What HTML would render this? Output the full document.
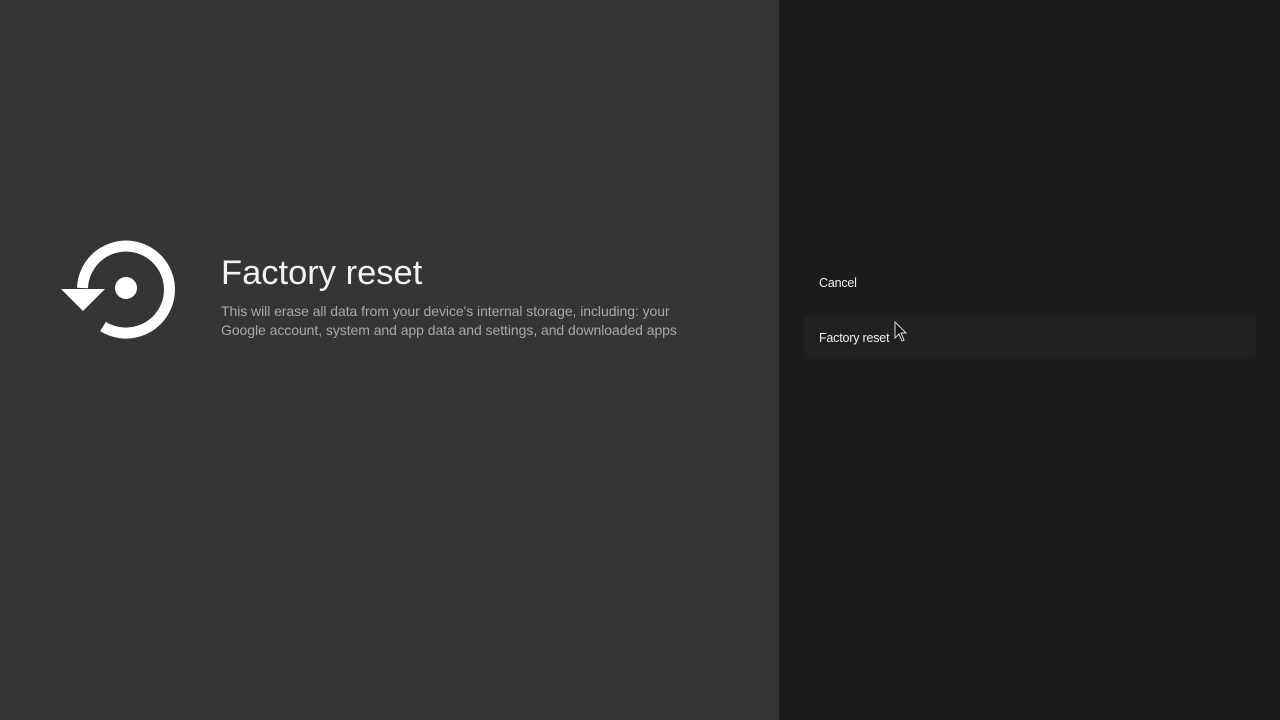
<!DOCTYPE html>
<html><head><style>
html,body{margin:0;padding:0;}
body{width:1280px;height:720px;position:relative;overflow:hidden;font-family:"Liberation Sans",sans-serif;}
.left{position:absolute;left:0;top:0;width:779px;height:720px;background:#353535;}
.right{position:absolute;left:779px;top:0;width:501px;height:720px;background:#1b1b1b;}
h1{position:absolute;left:221px;top:254px;margin:0;font-weight:normal;font-size:34.5px;color:#f2f2f2;}
.desc{position:absolute;left:221px;top:302px;font-size:14px;line-height:19px;color:#a8a8a8;letter-spacing:-0.06px;}
.item{position:absolute;font-size:12.5px;color:#f0f0f0;letter-spacing:-0.2px;}
.sel{position:absolute;left:804px;top:315px;width:452px;height:44px;background:#202020;border-radius:2px;}
</style></head><body>
<div class="left">
<svg style="position:absolute;left:0;top:0" width="300" height="400">
<path d="M82.5 288 A43.5 43.5 0 1 1 103 326.5" fill="none" stroke="#fff" stroke-width="11"/>
<polygon points="61,289 105,289 83,311" fill="#fff"/>
<circle cx="126" cy="288" r="11" fill="#fff"/>
</svg>
<h1>Factory reset</h1>
<div class="desc">This will erase all data from your device's internal storage, including: your<br>Google account, system and app data and settings, and downloaded apps</div>
</div>
<div class="right"></div>
<div class="sel"></div>
<div class="item" style="left:819px;top:276px">Cancel</div>
<div class="item" style="left:819px;top:331px">Factory reset</div>
<svg style="position:absolute;left:894px;top:321px" width="16" height="24"><path d="M1 1 L1 17 L5 13 L8 20 L10 19 L7 12 L12 12 Z" fill="#111" stroke="#ddd" stroke-width="1"/></svg>
</body></html>
